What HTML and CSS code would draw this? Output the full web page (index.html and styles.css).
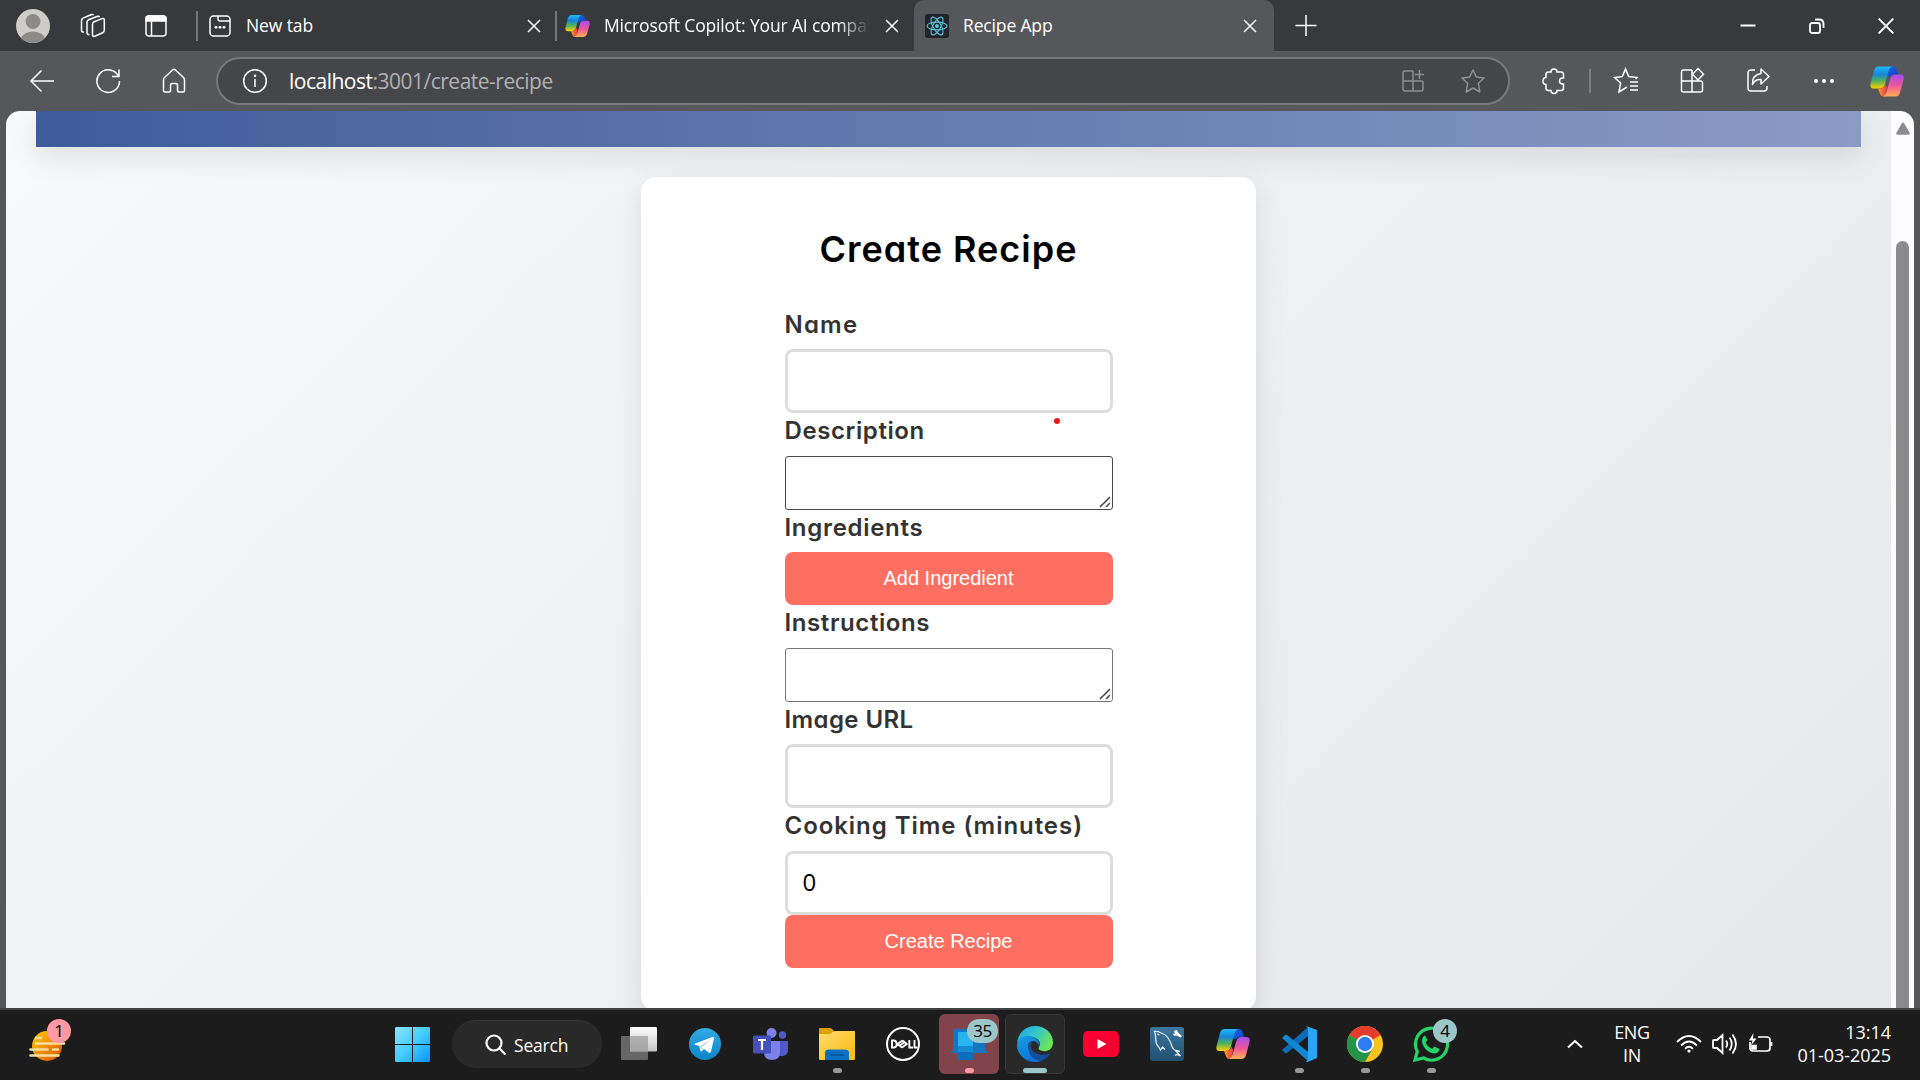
FILE: index.html
```html
<!DOCTYPE html>
<html lang="en">
<head>
<meta charset="utf-8">
<title>Recipe App</title>
<link rel="stylesheet" href="styles.css">
</head>
<body>
<svg class="defs" aria-hidden="true">
  <defs>
    <linearGradient id="cpA" x1="0" y1="0" x2="0" y2="1"><stop offset="0" stop-color="#22b8f5"/><stop offset=".35" stop-color="#1686dc"/><stop offset=".65" stop-color="#4fb05c"/><stop offset="1" stop-color="#ffd000"/></linearGradient>
    <linearGradient id="cpB" x1="0" y1="0" x2="0" y2="1"><stop offset="0" stop-color="#a04df0"/><stop offset=".5" stop-color="#f0569a"/><stop offset="1" stop-color="#ffb152"/></linearGradient>
    <linearGradient id="cpC" x1="0" y1="0" x2="1" y2="1"><stop offset="0" stop-color="#0f6fe0"/><stop offset="1" stop-color="#1638c8"/></linearGradient>
    <linearGradient id="cpD" x1="0" y1="0" x2="1" y2="0"><stop offset="0" stop-color="#ff9a2e"/><stop offset="1" stop-color="#ee3c46"/></linearGradient>
    <linearGradient id="win" x1="0" y1="0" x2="1" y2="1"><stop offset="0" stop-color="#8be4ff"/><stop offset=".5" stop-color="#44ccff"/><stop offset="1" stop-color="#0b94fb"/></linearGradient>
    <linearGradient id="sun" x1="0" y1="0" x2="1" y2="1"><stop offset="0" stop-color="#ffd000"/><stop offset="1" stop-color="#dd4e00"/></linearGradient>
    <linearGradient id="tvA" x1="0" y1="0" x2="0" y2="1"><stop offset="0" stop-color="#fff"/><stop offset="1" stop-color="#c4c4c4"/></linearGradient>
    <linearGradient id="tg" x1="0" y1="0" x2="0" y2="1"><stop offset="0" stop-color="#33abe3"/><stop offset="1" stop-color="#0b83c6"/></linearGradient>
    <linearGradient id="fold" x1="0" y1="0" x2="1" y2="1"><stop offset="0" stop-color="#ffdc70"/><stop offset="1" stop-color="#fcb90a"/></linearGradient>
    <linearGradient id="edA" x1="0" y1="0" x2="1" y2=".5"><stop offset="0" stop-color="#1f9fdc"/><stop offset=".5" stop-color="#30c5d2"/><stop offset="1" stop-color="#6be45b"/></linearGradient>
    <linearGradient id="edB" x1="0" y1="0" x2=".6" y2="1"><stop offset="0" stop-color="#1b9de2"/><stop offset="1" stop-color="#0873d6"/></linearGradient>
    <linearGradient id="sql" x1="0" y1="0" x2="0" y2="1"><stop offset="0" stop-color="#3c77a3"/><stop offset="1" stop-color="#214f6e"/></linearGradient>
    <symbol id="copilot" viewBox="0 0 34 30">
      <path d="M17 0h6q2.500 0 3.300 2.300L28 8h-4q-3.500 0-4.500 3L17 9z" fill="url(#cpC)"/>
      <path d="M8.500 0H22q-2.500.8-3.400 4L15 17.500q-1.200 4.500-5.500 4.500H3.600Q-.5 22 .6 17L4 4Q5.200 0 8.500 0z" fill="url(#cpA)"/>
      <path d="M16 30h-2.500q-2.500 0-3.400-2.600L8 22h2q4.300-.2 5.600-4.500L17 21z" fill="url(#cpD)"/>
      <path d="M25.500 30H13q2.500-1 3.400-4L20 13q1.200-5 5.500-5h5Q34.600 8 33.500 13L30 26q-1.200 4-4.500 4z" fill="url(#cpB)"/>
    </symbol>
    <symbol id="close" viewBox="0 0 14 14"><path d="M1 1l12 12M13 1L1 13" fill="none" stroke="#fff" stroke-width="1.500"/></symbol>
    <symbol id="grip" viewBox="0 0 12 12"><path d="M1 11L11 1M7 11l4-4" fill="none" stroke="#444" stroke-width="1.500"/></symbol>
  </defs>
</svg>

<header class="tabs">
  <div class="slot"><svg width="34" height="34" viewBox="0 0 34 34"><circle cx="17" cy="17" r="17" fill="#cfcdca"/><circle cx="17" cy="12.500" r="7.500" fill="#8e8a87"/><path d="M5 29a12.500 9 0 0 1 24 0 17 17 0 0 1-24 0z" fill="#8e8a87"/></svg></div>
  <div class="slot spaces"><svg class="line" width="26" height="26" viewBox="0 0 26 26"><path d="M12.500 11.200q0-1.700 1.600-2.400l8-3.200q2.200-.8 2.200 1.500v10.200q0 1.700-1.600 2.400l-8 3.500q-2.200.8-2.200-1.500z"/><path d="M9.500 21.500q-2.500.5-2.500-2V9.200q0-1.700 1.600-2.400l8.300-3.300q2-.8 2.600.8M4 19q-2.500.5-2.500-2V7.500q0-1.700 1.600-2.400L11 1.800q2-.8 2.500.5"/></svg></div>
  <div class="slot"><svg class="line" width="24" height="24" viewBox="0 0 24 24"><rect x="2" y="2" width="20" height="20" rx="3"/><path d="M2 7V4.500Q2 2 4.500 2h15Q22 2 22 4.500V7z" fill="#fff"/><path d="M7.500 7v15"/></svg></div>
  <div class="tab first">
    <svg class="line" width="24" height="24" viewBox="0 0 24 24"><rect x="2" y="2" width="20" height="20" rx="3.500"/><path d="M10 2v3q0 2 2 2h10"/><g fill="#fff" stroke="none"><circle cx="8" cy="13.300" r="1.400"/><circle cx="12" cy="13.300" r="1.400"/><circle cx="16" cy="13.300" r="1.400"/></g></svg>
    <span class="t1">New tab</span><svg class="x" width="14" height="14"><use href="#close"/></svg>
  </div>
  <div class="tab second">
    <svg width="25" height="22"><use href="#copilot"/></svg>
    <span class="t2">Microsoft Copilot: Your AI companion</span><svg class="x" width="14" height="14"><use href="#close"/></svg>
  </div>
  <div class="tab active">
    <svg width="24" height="24" viewBox="0 0 24 24"><rect width="24" height="24" rx="3" fill="#20232a"/><g fill="none" stroke="#58c4dc" stroke-width="1.100"><ellipse cx="12" cy="12" rx="10" ry="3.900"/><ellipse cx="12" cy="12" rx="10" ry="3.900" transform="rotate(60 12 12)"/><ellipse cx="12" cy="12" rx="10" ry="3.900" transform="rotate(120 12 12)"/></g><circle cx="12" cy="12" r="2" fill="#58c4dc"/></svg>
    <span class="t3">Recipe App</span><svg class="x" width="14" height="14"><use href="#close"/></svg>
  </div>
  <div class="newtab"><svg class="line" width="22" height="22" viewBox="0 0 22 22"><path d="M11 0v21M.5 10.500h21"/></svg></div>
  <div class="wincontrols">
    <svg width="16" height="18" viewBox="0 0 16 18"><path d="M.5 8.500h15" stroke="#fff" stroke-width="2"/></svg>
    <svg width="16" height="18" viewBox="0 0 16 18" fill="none" stroke="#fff" stroke-width="1.800"><rect x="1" y="6" width="10" height="10" rx="2"/><path d="M6 2.500h4q4.500 0 4.500 4.500v4"/></svg>
    <svg width="16" height="16" viewBox="0 0 14 14"><path d="M.5.5l13 13M13.500.5l-13 13" stroke="#fff" stroke-width="1.700"/></svg>
  </div>
</header>

<nav class="toolbar">
  <div class="btn"><svg class="line" width="26" height="24" viewBox="0 0 26 24"><path d="M12.500 1.500L2 12l10.500 10.500M2 12h23"/></svg></div>
  <div class="btn"><svg class="line" width="26" height="26" viewBox="0 0 26 26"><path d="M23.500 8.500A11.300 11.300 0 1 0 24.500 13M24 1.500V8.500h-7"/></svg></div>
  <div class="btn"><svg class="line" width="24" height="26" viewBox="0 0 24 26"><path d="M1.500 12q0-1.500 1-2.500l8-7.500q1.500-1.300 3 0l8 7.500q1 1 1 2.500v10.500q0 1.500-1.500 1.500h-4q-1.500 0-1.500-1.500V17q0-1.500-1.500-1.500h-4Q8.500 15.500 8.500 17v5.500Q8.500 24 7 24H3q-1.500 0-1.500-1.500z"/></svg></div>
  <div class="address">
    <svg class="line" width="26" height="26" viewBox="0 0 26 26"><circle cx="13" cy="13" r="11.300"/><path d="M13 11v8"/><circle cx="13" cy="7.800" r=".6"/></svg>
    <span class="url"><b>localhost</b>:3001/create-recipe</span>
    <svg class="line dim" width="24" height="24" viewBox="0 0 24 24"><path d="M12 2H4Q2 2 2 4v16q0 2 2 2h16q2 0 2-2v-6q0-2-2-2H2M12 2v20M18.500 1v9M14 5.500h9"/></svg>
    <svg class="line dim star" width="26" height="26" viewBox="0 0 26 26"><path d="M13 2l3.300 7 7.700 1-5.600 5.300L19.800 24 13 20l-6.800 4 1.400-8.700L2 10l7.700-1z" stroke-linejoin="round"/></svg>
  </div>
  <div class="btn ext"><svg class="line" width="26" height="28" viewBox="0 0 26 28"><path d="M10 5q0-3 3-3t3 3h4q2.500 0 2.500 2.500V11h-1q-3 0-3 3t3 3h1v4q0 2.500-2.500 2.500h-4q0 3-3 3t-3-3H7.500Q5 23.500 5 21v-3.500q-3 0-3-3.500t3-3.500v-3Q5 5 7.500 5z"/></svg></div>
  <div class="vsep"></div>
  <div class="btn"><svg class="line" width="26" height="28" viewBox="0 0 26 28"><path d="M14 20l-8 5 1.600-9L1.500 10.500l7.800-1L12.500 2l3.200 7.500 8.300 1-1.500 1.500M17 15h8M17 19h8M17 23h8"/></svg></div>
  <div class="btn"><svg class="line" width="26" height="28" viewBox="0 0 26 28"><path d="M13 3H4.500Q2.500 3 2.500 5v18q0 2 2 2h17q2 0 2-2v-7q0-2-2-2h-19M13 3v22M19 1.500l5.500 5.700L19 13l-5.500-5.800z"/></svg></div>
  <div class="btn"><svg class="line" width="26" height="28" viewBox="0 0 26 28"><path d="M10 3H6Q3 3 3 6v15q0 3 3 3h13q3 0 3-3v-2M16 2l8 7.500-8 7.500v-4.500q-6-.5-8.500 5Q7 8 16 6.500z" stroke-linejoin="round"/></svg></div>
  <div class="btn"><svg width="22" height="6" viewBox="0 0 22 6" fill="#fff"><circle cx="3" cy="3" r="2"/><circle cx="11" cy="3" r="2"/><circle cx="19" cy="3" r="2"/></svg></div>
  <div class="btn cop"><svg width="34" height="31"><use href="#copilot"/></svg></div>
</nav>

<main class="frame">
  <section class="page">
    <div class="banner"></div>
    <div class="card">
      <h1>Create Recipe</h1>
      <div class="form">
        <label class="l1">Name</label><div class="input"></div>
        <label class="l2">Description</label><div class="area"><svg width="12" height="12"><use href="#grip"/></svg></div>
        <label class="l3">Ingredients</label><button>Add Ingredient</button>
        <label class="l4">Instructions</label><div class="area soft"><svg width="12" height="12"><use href="#grip"/></svg></div>
        <label class="l5">Image URL</label><div class="input"></div>
        <label class="l6">Cooking Time (minutes)</label><div class="input">0</div>
        <button>Create Recipe</button>
      </div>
      <i class="pointer"></i>
    </div>
  </section>
  <aside class="scroll"><svg width="16" height="14" viewBox="0 0 16 14"><path d="M6.700 1.500q1.300-1.800 2.600 0l5.200 9q.8 2.300-1.300 2.300H2.800Q.7 12.800 1.500 10.500z" fill="#8b8b8b"/></svg><div class="thumb"></div></aside>
</main>

<footer class="taskbar">
  <div class="weather"><svg width="38" height="44" viewBox="0 0 38 44"><circle cx="19" cy="24" r="15" fill="url(#sun)"/><path d="M8 16h5M8 21.500h28M2.500 27.500h17M25 27.500h5M2.500 33.500h28" stroke="#f6dda0" stroke-width="2.600" stroke-linecap="round"/></svg><span class="badge pink">1</span></div>
  <div class="start"><svg width="35" height="35" viewBox="0 0 35 35"><path d="M1 0h16v17H0V1zM18 0h16l1 1v16H18zM0 18h17v17H1l-1-1zM18 18h17v16l-1 1H18z" fill="url(#win)"/></svg></div>
  <div class="search"><svg width="22" height="22" viewBox="0 0 22 22" fill="none" stroke="#fff" stroke-width="2.200"><circle cx="9" cy="9" r="7.500"/><path d="M14.500 14.500l6 6"/></svg><span>Search</span></div>
  <div class="apps">
    <div class="app"><svg width="36" height="36" viewBox="0 0 36 36"><rect y="10" width="27" height="24" rx="1" fill="#666"/><rect x="9" y="1" width="27" height="24.500" rx="1" fill="url(#tvA)"/><path d="M9 10h18v15.500H9z" fill="#999" opacity=".7"/></svg></div>
    <div class="app"><svg width="32" height="32" viewBox="0 0 32 32"><circle cx="16" cy="16" r="16" fill="url(#tg)"/><path d="M6 15.500L23.500 9q2-.6 1.500 1.500l-3 13q-.5 2-2.300 1L15 21l-2.500 2.300q-1 .7-1.200-.8l-1-4.500L6 16.700q-1-.6 0-1.200z" fill="#fff"/><path d="M11 18l10-6.300-8 7.600-.6 4z" fill="#b8d8ec"/></svg></div>
    <div class="app"><svg width="36" height="32" viewBox="0 0 36 32"><circle cx="18.500" cy="5" r="5" fill="#7b83eb"/><circle cx="29.500" cy="7" r="3.700" fill="#5059c9"/><path d="M26 13h9v9q0 5-5 6h-4z" fill="#5059c9"/><path d="M11 13h16v11q0 8-8 8t-8-8z" fill="#7b83eb"/><rect y="7.500" width="18" height="18" rx="1.500" fill="#4650bb"/><path d="M5 12h8M9 12v10" stroke="#fff" stroke-width="2.200"/></svg></div>
    <div class="app"><svg width="36" height="34" viewBox="0 0 36 34"><path d="M0 9V2q0-1 1-1h10q1 0 2 1l2 2-2 5z" fill="#e09f00"/><path d="M0 7h10q2 0 3-1.500T16 4h19q1 0 1 1v27q0 1-1 1H1q-1 0-1-1z" fill="url(#fold)"/><path d="M6 33v-7q0-3.500 3.500-3.500h17q3.500 0 3.500 3.500v7z" fill="#0870c4"/><path d="M11 28h14" stroke="#064e91" stroke-width="1.600"/></svg><i class="dot"></i></div>
    <div class="app"><svg width="34" height="34" viewBox="0 0 34 34"><circle cx="17" cy="17" r="16" fill="none" stroke="#fff" stroke-width="2"/><g fill="none" stroke="#fff" stroke-width="1.900"><path d="M6 13.500v7h1.700q3 0 3-3.500t-3-3.500zM23.300 13v7.500H27M28.500 13v7.500h3M11.500 17l5-3.500M13.500 18.800l5.500-4M16 20.500l5.500-4M11.500 17l4.500 3.500M16.500 13.500l4.500 3.500"/></g></svg></div>
    <div class="app alert"><svg width="36" height="34" viewBox="0 0 36 34"><path d="M2 2h32v22h2v2H0v-2h2z" fill="#1475c0"/><path d="M7 5h15v28H7z" fill="#27b4ef"/><path d="M7 19h15v14H7z" fill="#168bd5"/><path d="M7 25h15v8H7z" fill="#0c6fbd"/></svg><span class="badge teal wide">35</span><i class="dot rose"></i></div>
    <div class="app current"><svg width="36" height="36" viewBox="0 0 36 36"><path d="M0 18C1 6 9 0 18 0c11 0 18 8 18 16 0 7-5 10-10 9-5-.5-5-3-3.500-5 1.500-3-.5-8-7.500-9C7 10 2 14 0 18z" fill="url(#edA)"/><path d="M0 19C2 11 9 8 16 11c5 2 7 6 6 9-.6-3-3-5-6-5-5 0-6 6-3 11 3 5 7 8 11 9C13 39 0 31 0 19z" fill="url(#edB)"/><path d="M13 17c-4 8 1 17 11 18 5-2 8-5 10-8-8 4-18 1-20-5-.6-2 0-4 2-7-1 0-2 1-3 2z" fill="#124f9e"/></svg><i class="dot long"></i></div>
    <div class="app"><svg width="36" height="26" viewBox="0 0 36 26"><rect width="36" height="26" rx="5" fill="#f8002f"/><path d="M14.500 8l9 5-9 5z" fill="#fff"/></svg></div>
    <div class="app"><svg width="34" height="34" viewBox="0 0 34 34"><rect width="34" height="34" rx="3" fill="url(#sql)"/><path d="M8 19C4 15 7 9 4.500 4.500c4-.5 6 1.500 8 2 6 2 8 8 9.500 13q1 3 3.500 4l5 5.500-4-1.500-1.500 1M8 19l2.500 4 2-3 2.500 2.500M25.500 23.500l4.500 1M7.500 7l2 1" fill="none" stroke="#e6eef4" stroke-width="1.300"/><path d="M24 4l2.500-1 2 3 3.500 3-1.500 1.500-4-2-2.500.3-1-2 2-.3z" fill="#fff"/></svg></div>
    <div class="app"><svg width="34" height="30"><use href="#copilot"/></svg></div>
    <div class="app"><svg width="36" height="36" viewBox="0 0 36 36"><path d="M1 24l3 3q1 .6 2 0L27 10V1Z" fill="#0c6cb5"/><path d="M1 12l3-3q1-.6 2 0l21 17v9z" fill="#1187d2"/><path d="M26.500.5L36 4v28l-9.500 4q-1 .2-1.500-1 2 0 2-2V3q0-2-2-2 .5-.8 1.500-.5z" fill="#29a5f3"/></svg><i class="dot"></i></div>
    <div class="app"><svg width="36" height="36" viewBox="0 0 36 36"><circle cx="18" cy="18" r="18" fill="#fcc31e"/><path d="M18 18L2.400 9A18 18 0 0 1 33.600 9z" fill="#e33b2e"/><path d="M18 18L2.400 9A18 18 0 0 0 18 36l7.800-13.500z" fill="#269447"/><circle cx="18" cy="18" r="9" fill="#fff"/><circle cx="18" cy="18" r="7.200" fill="#2f7cf0"/></svg><i class="dot"></i></div>
    <div class="app"><svg width="36" height="36" viewBox="0 0 36 36"><path d="M2 34l2.300-8.500A16 16 0 1 1 10.500 32z" fill="none" stroke="#25d366" stroke-width="3.200"/><path d="M12 9.500l2.500 4.500-2 2.800q2 4.200 6.500 6.200l2.500-2.500 5 2.500q-.5 4-5 4.500C14 27 8.500 19.500 9 14q.8-3.800 3-4.500z" fill="#25d366"/></svg><span class="badge teal">4</span><i class="dot"></i></div>
  </div>
  <div class="tray">
    <svg width="16" height="10" viewBox="0 0 16 10"><path d="M1 8.500L8 2l7 6.500" fill="none" stroke="#fff" stroke-width="2"/></svg>
    <div class="lang">ENG<br>IN</div>
    <svg class="wifi" width="26" height="20" viewBox="0 0 26 20" fill="none" stroke="#fff" stroke-width="1.800"><path d="M1 8q12-12 24 0M5 11.500q8-8 16 0M9 14.800q4-4 8 0"/><circle cx="13" cy="17" r="1.600" fill="#fff" stroke="none"/></svg>
    <svg class="vol" width="26" height="22" viewBox="0 0 26 22" fill="none" stroke="#fff" stroke-width="1.800"><path d="M1 8v6q0 1 1 1h3l5.500 5V2L5 7H2Q1 7 1 8zM14 7.500q2.500 3.500 0 7M17.500 4.500q4.500 6.500 0 13M20.500 1.500q7 9.500 0 19"/></svg>
    <svg class="bat" width="26" height="22" viewBox="0 0 26 22" fill="none" stroke="#fff" stroke-width="1.700"><path d="M10 4h9q3 0 3 3v8q0 3-3 3H5q-3 0-3-3V9"/><path d="M23.500 9v4M4 12.500h4V16H4z" fill="#fff"/><path d="M5.500 0L1 7.500h3.500L3 12.500l5.500-7H5z" fill="#fff" stroke="none"/></svg>
    <div class="clock">13:14<br>01-03-2025</div>
  </div>
</footer>
</body>
</html>
```
FILE: styles.css
```css
* { box-sizing: border-box; }
html, body { margin: 0; width: 1920px; height: 1080px; overflow: hidden; }
body { display: flex; flex-direction: column; background: #56575b; font-family: "Open Sans", "Noto Sans", sans-serif; color: #fff; }
svg { display: block; flex: none; }
.defs { position: absolute; width: 0; height: 0; }
.line { fill: none; stroke: #fff; stroke-width: 1.5; }
.dim { stroke: #8e8f92; }

.tabs { display: flex; align-items: center; height: 51px; background: #38393c; flex: none; }
.slot { width: 66px; display: flex; justify-content: center; align-items: center; }
.slot:nth-child(2) { width: 54px; }
.slot:nth-child(3) { width: 72px; }
.tab { display: flex; align-items: center; height: 30px; font-size: 17.5px; white-space: nowrap; border-left: 2px solid #75767a; }
.tab span { display: block; overflow: hidden; line-height: 28px; padding-bottom: 2px; }
.tab .x { margin-left: auto; }
.first { width: 359px; margin-left: 4px; padding: 0 14px 0 10px; }
.second { width: 359px; padding: 0 15px 0 8px; }
.active { width: 360px; height: 51px; border: 0; background: #56575b; border-radius: 10px 10px 0 0; padding: 0 17px 0 11px; }
.t1 { margin-left: 14px; letter-spacing: -.1px; }
.t2 { margin-left: 14px; width: 266px; letter-spacing: -.15px; mask-image: linear-gradient(90deg, #000 88%, transparent); }
.t3 { margin-left: 14px; letter-spacing: -.15px; }
.newtab { width: 64px; display: flex; justify-content: center; }
.wincontrols { margin-left: auto; display: flex; align-items: center; gap: 53px; padding-right: 26px; }

.toolbar { display: flex; align-items: center; height: 60px; padding: 0 0 0 9px; flex: none; background: #56575b; }
.btn { width: 66px; display: flex; justify-content: center; }
.address { width: 1294px; height: 48px; margin-left: 9px; border: 2px solid #77787c; border-radius: 24px; background: #454649; display: flex; align-items: center; padding: 0 22px 0 24px; }
.url { margin-left: 21px; margin-right: auto; font-size: 21px; letter-spacing: -.5px; color: #b0b1b3; }
.url b { font-weight: 400; color: #fff; }
.star { margin-left: 35px; }
.ext { margin-left: 11px; }
.vsep { width: 2px; height: 24px; margin: 0 2px; background: #7c7d81; }
.cop { width: 60px; }

.frame { height: 897px; flex: none; margin: 0 6px; display: flex; border-radius: 14px 14px 0 0; overflow: hidden; }
.page { width: 1885px; padding: 0 30px; overflow: hidden; background: linear-gradient(135deg, #f8f9fa, #e6e7eb); display: flex; flex-direction: column; align-items: center; }
.banner { width: 1825px; height: 36px; flex: none; background: linear-gradient(90deg, #3f5c9a, #8a9bc4); box-shadow: 0 10px 30px rgba(0,0,0,.1); }
.card { position: relative; width: 615px; height: 834px; flex: none; margin-top: 30px; padding-top: 45px; background: #fff; border-radius: 15px; box-shadow: 0 8px 30px rgba(0,0,0,.1); display: flex; flex-direction: column; align-items: center; }
h1 { margin: 0; height: 84px; font: 600 36px/54px Inter, sans-serif; font-feature-settings: "cv11"; color: #000; letter-spacing: 1px; white-space: nowrap; }
.form { width: 328px; display: grid; grid-template-rows: 43px 64px 43px 54px 42px 53px 43px 54px 42px 64px 43px 64px 53px; }
label { font: 600 24px/35px Inter, sans-serif; font-feature-settings: "cv11"; color: #333; white-space: nowrap; letter-spacing: .6px; }
.l1 { letter-spacing: 1.2px; padding-top: 1px; }
.l3 { letter-spacing: .7px; }
.l5 { letter-spacing: .4px; }
.l6 { letter-spacing: .95px; }
.input { border: 3px solid #ddd; border-radius: 8px; padding: 0 15px; font-size: 24px; line-height: 56px; color: #000; }
.area { border: 1px solid #4a4a4a; border-radius: 3px; display: flex; align-items: flex-end; justify-content: flex-end; padding: 1px; }
.soft { border-color: #767676; }
button { border: 0; border-radius: 8px; background: #ff6f61; color: #fff; font: 20px "Liberation Sans", Arial, sans-serif; padding: 0; }
.pointer { position: absolute; left: 413px; top: 241px; width: 6px; height: 6px; border-radius: 50%; background: #e81720; }
.scroll { width: 23px; background: #fcfcfc; display: flex; flex-direction: column; align-items: center; padding-top: 11px; }
.thumb { width: 13px; height: 900px; flex: none; margin-top: 105px; border-radius: 7px; background: #8b8b8b; }

.taskbar { height: 72px; flex: none; border-top: 2px solid #404143; background: #1c1c1c; display: flex; align-items: center; padding-bottom: 2px; }
.weather { position: relative; width: 44px; margin-left: 28px; }
.start { margin-left: 323px; }
.search { width: 150px; height: 48px; margin-left: 22px; border-radius: 24px; background: #292929; border-top: 1px solid #363636; display: flex; align-items: center; padding-left: 33px; font-size: 17.5px; }
.search span { margin-left: 7px; letter-spacing: -.2px; }
.apps { display: flex; gap: 6px; margin-left: 7px; }
.app { position: relative; width: 60px; height: 60px; border-radius: 6px; display: flex; align-items: center; justify-content: center; }
.alert { background: #80444a; }
.current { background: #292929; border: 1px solid #383838; }
.dot { position: absolute; left: 50%; bottom: 1px; width: 9px; height: 5px; margin-left: -4px; border-radius: 3px; background: #989898; }
.rose { background: #ff99a4; }
.long { width: 24px; margin-left: -12px; background: #9cc7ca; bottom: 0; }
.badge { position: absolute; left: 32px; top: 5px; width: 24px; height: 24px; border-radius: 12px; font-size: 17px; line-height: 23px; text-align: center; color: #000; }
.pink { left: 19px; top: -3px; background: #ff99a4; }
.teal { background: #9cc7ca; }
.wide { left: 28px; width: 31px; letter-spacing: -.5px; }
.tray { margin-left: auto; padding-right: 29px; display: flex; align-items: center; font-size: 18px; line-height: 23.5px; }
.lang { width: 40px; margin-left: 29px; text-align: center; letter-spacing: -.4px; }
.wifi { margin-left: 24px; }
.vol { margin-left: 10px; }
.bat { margin-left: 10px; }
.clock { width: 105px; margin-left: 12px; text-align: right; letter-spacing: -.05px; white-space: nowrap; }
```
